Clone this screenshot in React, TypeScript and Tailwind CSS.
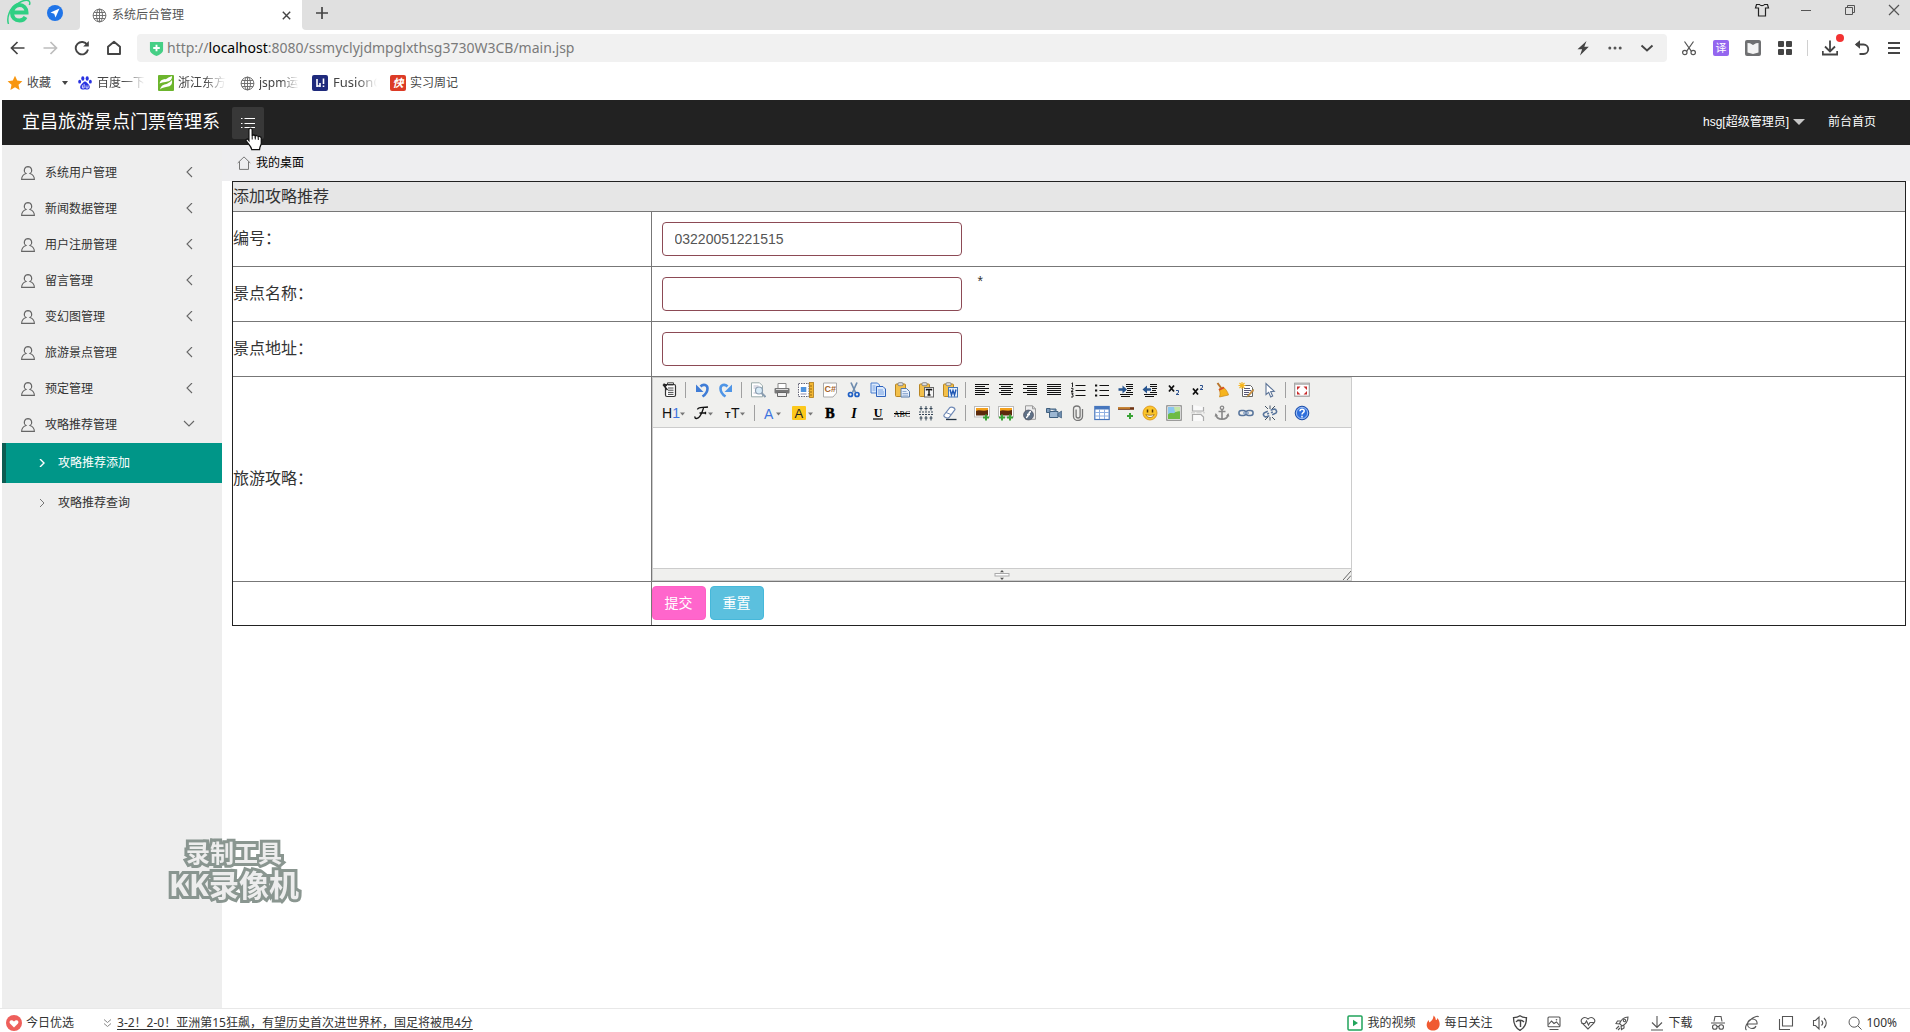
import React from "react";
import type { ReactNode } from "react";

type SvgProps = { children: ReactNode; size?: string; box?: string };

function Svg({ children, size = "w-4 h-4", box = "0 0 16 16" }: SvgProps) {
  return (
    <svg viewBox={box} className={`${size} block shrink-0`} fill="none" aria-hidden="true">
      {children}
    </svg>
  );
}

/* ---------- browser chrome icons ---------- */

const Globe = ({ size = "w-[15px] h-[15px]" }: { size?: string }) => (
  <Svg size={size}>
    <g stroke="#6b6b6b" strokeWidth="1">
      <circle cx="8" cy="8" r="6.8" />
      <ellipse cx="8" cy="8" rx="3.2" ry="6.8" />
      <path d="M8 1.2v13.6M1.2 8h13.6M2.2 4.8h11.6M2.2 11.2h11.6" />
    </g>
  </Svg>
);

const BrowserLogo = () => (
  <Svg size="w-6 h-6" box="0 0 24 24">
    <path d="M5 12.5h14.5c0-4.500-3-7.500-7-7.500S5 8.500 5 13s3 7.500 7.500 7.500c3 0 5-1.500 6-3.500" stroke="#2fcf83" strokeWidth="4" />
    <path d="M1.500 24C-.500 18 2 8 11 3.500 15 1 20-.500 22 1c1 1 1 2.500.300 4" stroke="#2fcf83" strokeWidth="1.500" />
  </Svg>
);

const Plane = () => (
  <Svg size="w-4 h-4">
    <circle cx="8" cy="8" r="8" fill="#1f74e8" />
    <path d="M12.500 3.500 3.500 7.600l3.700 1.200 1.300 3.700z" fill="#fff" />
  </Svg>
);

const Back = ({ dim = false }: { dim?: boolean }) => (
  <Svg>
    {dim ? (
      <path d="M1.500 8h13M8.500 2l6 6-6 6" stroke="#bdbdbd" strokeWidth="1.700" />
    ) : (
      <path d="M14.500 8h-13M7.500 2l-6 6 6 6" stroke="#444" strokeWidth="1.700" />
    )}
  </Svg>
);

const Reload = () => (
  <Svg>
    <path d="M13.300 5A6.200 6.200 0 1 0 14 9.500" stroke="#444" strokeWidth="1.900" />
    <path d="M14.800 1v5.600H9.200z" fill="#444" />
  </Svg>
);

const HomeOutline = () => (
  <Svg>
    <path d="M2 6.800 8 1.800l6 5V14H2z" stroke="#444" strokeWidth="1.900" strokeLinejoin="round" />
  </Svg>
);

const ShieldPlus = () => (
  <Svg size="w-[15px] h-[15px]">
    <path d="M1 1h14v8.500c0 3-3.500 5-7 6.500-3.500-1.500-7-3.500-7-6.500z" fill="#45cf85" />
    <path d="M8 4v7M4.500 7.500h7" stroke="#fff" strokeWidth="2" />
  </Svg>
);

const Bolt = () => (
  <Svg>
    <path d="M11.500 1 2.500 9.200h4.600L5 15.500l8.800-8.800H9.300z" fill="#444" />
  </Svg>
);
const Dots = () => (
  <Svg>
    <g fill="#555">
      <circle cx="2.800" cy="8" r="1.500" />
      <circle cx="8" cy="8" r="1.500" />
      <circle cx="13.200" cy="8" r="1.500" />
    </g>
  </Svg>
);
const ChevDown = () => (
  <Svg>
    <path d="m2.500 5.500 5.500 5 5.500-5" stroke="#444" strokeWidth="1.900" />
  </Svg>
);
const Scissors = () => (
  <Svg>
    <g stroke="#555" strokeWidth="1.200">
      <path d="m3.500 1.500 6.800 9.700M12.500 1.500 5.700 11.200" />
      <circle cx="3.800" cy="12.500" r="2.200" />
      <circle cx="12.200" cy="12.500" r="2.200" />
    </g>
  </Svg>
);
const Book = () => (
  <Svg>
    <rect width="16" height="16" rx="2" fill="#6f7072" />
    <path d="M2.500 3 5 3.200 8 5l3-1.800 2.500-.200v9.500L8 14l-5.500-1.500z" fill="#f4f4f4" />
  </Svg>
);
const Grid4 = () => (
  <Svg>
    <g fill="#444">
      <rect x="1" y="1" width="6" height="6" rx="1" />
      <rect x="9" y="1" width="6" height="6" rx="1" />
      <rect x="1" y="9" width="6" height="6" rx="1" />
      <rect x="9" y="9" width="6" height="6" rx="1" />
    </g>
  </Svg>
);
const Download = () => (
  <Svg>
    <path d="M8 .500v11M3 6.500l5 5 5-5M.800 11v3.500h14.400V11" stroke="#444" strokeWidth="1.800" />
  </Svg>
);
const UndoArrow = () => (
  <Svg>
    <path d="M2 4.500h7.500a4.700 4.700 0 0 1 0 9.500H5.500" stroke="#444" strokeWidth="1.800" />
    <path d="M6 .300v8.400L.800 4.500z" fill="#444" />
  </Svg>
);
const Burger = () => (
  <Svg>
    <path d="M2 3h12M2 8h12M2 13h12" stroke="#444" strokeWidth="2" />
  </Svg>
);

function TabStrip() {
  return (
    <div className="flex h-[30px] bg-white">
      <div className="flex w-20 shrink-0 items-start gap-4 rounded-br bg-[#e0e0e0] pl-[7px]">
        <BrowserLogo />
        <button className="mt-[5px]" aria-label="导航">
          <Plane />
        </button>
      </div>
      <div className="flex w-[222px] shrink-0 items-center pl-3 pr-2">
        <Globe />
        <span className="ml-[5px] flex-1 text-xs text-[#555]">系统后台管理</span>
        <button className="flex h-4 w-4 items-center justify-center" aria-label="关闭标签页">
          <Svg size="w-[9px] h-[9px]" box="0 0 9 9">
            <path d="m.800.800 7.400 7.400M8.200.800.800 8.200" stroke="#444" strokeWidth="1.400" />
          </Svg>
        </button>
      </div>
      <div className="flex flex-1 items-start justify-between rounded-bl bg-[#e0e0e0] pl-[14px] pr-2">
        <button className="mt-[7px]" aria-label="新建标签页">
          <Svg size="w-3 h-3" box="0 0 12 12">
            <path d="M6 0v12M0 6h12" stroke="#444" strokeWidth="1.700" />
          </Svg>
        </button>
        <div className="mt-[2px] flex gap-7">
          <button aria-label="皮肤">
            <Svg>
              <path d="M5.500 2.500H2.500L1.500 6h3v8h7V6h3l-1-3.500h-3c-1 1.500-4 1.500-5 0z" stroke="#222" strokeWidth="1.200" />
            </Svg>
          </button>
          <button aria-label="最小化">
            <Svg>
              <path d="M3 8.500h10" stroke="#555" />
            </Svg>
          </button>
          <button aria-label="还原">
            <Svg>
              <path d="M3.500 5.500h7v7h-7zM5.500 5V3.500h7v7H11" stroke="#555" />
            </Svg>
          </button>
          <button aria-label="关闭">
            <Svg>
              <path d="m3 3 10 10M13 3 3 13" stroke="#555" strokeWidth="1.200" />
            </Svg>
          </button>
        </div>
      </div>
    </div>
  );
}

function AddressRow() {
  return (
    <div className="flex h-9 items-center bg-white pl-[10px] pr-2">
      <div className="flex gap-4">
        <button aria-label="后退"><Back /></button>
        <button aria-label="前进"><Back dim /></button>
        <button aria-label="刷新"><Reload /></button>
        <button aria-label="主页"><HomeOutline /></button>
      </div>
      <div className="ml-[15px] flex h-7 flex-1 items-center rounded bg-[#f1f1f1] pl-3 pr-3">
        <ShieldPlus />
        <div className="ml-[3px] flex-1 text-sm text-[#7a7a7a]">
          http://<span className="text-black">localhost</span>:8080/ssmyclyjdmpglxthsg3730W3CB/main.jsp
        </div>
        <div className="flex gap-4">
          <button aria-label="极速模式"><Bolt /></button>
          <button aria-label="更多"><Dots /></button>
          <button aria-label="展开"><ChevDown /></button>
        </div>
      </div>
      <div className="ml-[14px] flex items-center">
        <div className="flex gap-4">
          <button aria-label="截图"><Scissors /></button>
          <button className="h-4 w-4 rounded-[2px] bg-[#9466ef] text-[11px] leading-4 text-white">译</button>
          <button aria-label="阅读"><Book /></button>
          <button aria-label="扩展"><Grid4 /></button>
        </div>
        <div className="mx-[14px] h-4 w-px bg-[#d0d0d0]" />
        <div className="flex gap-4">
          <button className="relative" aria-label="下载">
            <Download />
            <span className="absolute -right-1.5 -top-1.5 h-2 w-2 rounded-full bg-[#f33232]" />
          </button>
          <button aria-label="撤销关闭"><UndoArrow /></button>
          <button aria-label="菜单"><Burger /></button>
        </div>
      </div>
    </div>
  );
}

const fade = "whitespace-nowrap [mask-image:linear-gradient(to_right,black_55%,transparent)]";

function Bookmarks() {
  return (
    <div className="flex h-[34px] items-center bg-white pl-[7px] text-xs text-[#444]">
      <a href="#fav" className="flex items-center gap-[4px]">
        <Svg>
          <path d="m8 .800 2.200 4.800 5.200.600-3.900 3.500 1.100 5.200L8 12.300l-4.600 2.600 1.100-5.200L.600 6.200l5.200-.600z" fill="#f8960f" />
        </Svg>
        收藏
      </a>
      <Svg size="ml-[11px] w-[6px] h-[4px]" box="0 0 6 4">
        <path d="M0 0h6L3 4z" fill="#444" />
      </Svg>
      <a href="#baidu" className="ml-[10px] flex items-center gap-[5px]">
        <Svg size="w-[14px] h-[14px]">
          <g fill="#2932e1">
            <ellipse cx="5.500" cy="2.800" rx="1.800" ry="2.500" />
            <ellipse cx="10.500" cy="2.800" rx="1.800" ry="2.500" />
            <ellipse cx="1.900" cy="6.500" rx="1.700" ry="2.200" />
            <ellipse cx="14.100" cy="6.500" rx="1.700" ry="2.200" />
            <path d="M8 6.200c1.800 0 2.300 1.800 3.900 3.100 2.600 2.200 1.800 6-.900 6-1.200 0-2-.300-3-.300s-1.800.300-3 .300c-2.700 0-3.500-3.800-.900-6C5.700 8 6.200 6.200 8 6.200z" />
          </g>
          <path d="M5 10.500v3.200h2V9M9.200 10.800v2.900h2.300v-3" stroke="#fff" strokeWidth=".900" />
        </Svg>
        <span className={`w-12 ${fade}`}>百度一下</span>
      </a>
      <a href="#zj" className="ml-[13px] flex items-center gap-1">
        <Svg>
          <rect width="16" height="16" rx="1" fill="#6cb52d" />
          <path d="M1.500 8.500C3 3 7 5 9 3.500c2-1.500 3.500-1.500 5-2.500.300 5-4 5.500-6.500 6S3.500 7.500 1.500 8.500z" fill="#fff" />
          <path d="M2 14.500C3.500 9 7 10 9.500 8.500c1.500-1 3.500-2 4.500-3.500.800 6-3 6.500-6 7s-4.500 1-6 2.500z" fill="#fff" />
        </Svg>
        <span className={`w-12 ${fade}`}>浙江东方</span>
      </a>
      <a href="#jspm" className="ml-[14px] flex items-center gap-1">
        <Globe />
        <span className={`w-10 ${fade}`}>jspm运</span>
      </a>
      <a href="#fusion" className="ml-[13px] flex items-center gap-[5px]">
        <Svg>
          <rect width="16" height="16" rx="2" fill="#1f2a7c" />
          <path d="M5 4v8M8 8v4M11.500 3.500v5.500M11.500 10.500V12M5 11h3" stroke="#fff" strokeWidth="1.600" />
        </Svg>
        <span className={`w-11 text-[13px] ${fade}`}>FusionC</span>
      </a>
      <a href="#zhouji" className="ml-[13px] flex items-center gap-1">
        <span className="h-4 w-4 rounded-[2px] bg-[#dc3b26] text-center text-[11px] font-bold italic leading-4 text-white">快</span>
        实习周记
      </a>
    </div>
  );
}

/* ---------- application ---------- */

function AppHeader() {
  return (
    <header className="ml-0.5 flex h-[45px] items-center bg-[#222] pl-5 pr-[34px] text-white">
      <h1 className="w-[210px] pb-0.5 text-lg leading-6">宜昌旅游景点门票管理系</h1>
      <div className="relative">
        <button className="flex h-8 w-8 items-center justify-center rounded-[2px] bg-[#383838]" aria-label="折叠菜单">
          <Svg>
            <path d="M4.500 3.500H15M4.500 8.500H15M4.500 12.500H15" stroke="#fff" strokeWidth="1" />
            <path d="M1 3.500h1.500M1 8.500h1.500M1 12.500h1.500" stroke="#fff" strokeWidth="1" />
          </Svg>
        </button>
        <div className="pointer-events-none absolute left-[13px] top-5 z-10">
          <Svg size="w-[18px] h-6" box="0 0 18 24">
            <path
              d="M5.500 1.200c1 0 1.700.700 1.700 1.700v6c.300-1.300 3-1.200 3.100.300.600-1.100 2.800-.900 3 .700.800-.900 2.900-.500 3 1.300v5c0 2-1.600 3-1.800 6.500H6.800C6.500 19.500 3 17 1.200 13.800c-.700-1.400 1-2.400 2-1.300l.700.900V2.900c0-1 .600-1.700 1.600-1.700z"
              fill="#fff" stroke="#111" strokeWidth="1.300"
            />
            <path d="M7.200 9v3.500M10.300 9.500v3M13.300 10.500v2.500" stroke="#111" />
          </Svg>
        </div>
      </div>
      <nav className="ml-auto flex items-center pb-0.5 text-xs">
        <button className="flex items-center gap-1">
          hsg[超级管理员]
          <Svg size="w-3 h-[6px]" box="0 0 12 6">
            <path d="M0 0h12L6 6z" fill="#c6c6c6" />
          </Svg>
        </button>
        <a href="#front" className="ml-[23px]">前台首页</a>
      </nav>
    </header>
  );
}

const menu = [
  "系统用户管理", "新闻数据管理", "用户注册管理", "留言管理",
  "变幻图管理", "旅游景点管理", "预定管理", "攻略推荐管理",
];

function Sidebar() {
  return (
    <aside className="w-[220px] shrink-0 bg-[#eee] pt-[10px] text-xs text-[#333]">
      {menu.map((name, i) => (
        <button key={name} className="flex h-9 w-full items-center pl-[19px] pr-[27px] text-left">
          <Svg size="w-[14px] h-[14px]" box="0 0 14 14">
            <path d="M7 .600a3.700 3.700 0 0 1 2 6.800c2.500.900 4.300 2.800 4.400 6H.600c.100-3.200 1.900-5.100 4.400-6A3.700 3.700 0 0 1 7 .600z" stroke="#666" strokeWidth="1.100" />
          </Svg>
          <span className="ml-[10px] flex-1">{name}</span>
          <Svg size="w-3 h-3" box="0 0 12 12">
            <path d={i === menu.length - 1 ? "m1 2 5 5 5-5" : "M9 0 4 5l5 5"} stroke="#666" strokeWidth="1.100" />
          </Svg>
        </button>
      ))}
      <a href="#add" className="flex h-10 items-center border-l-4 border-[#0c5c52] bg-[#009688] pl-8 text-white">
        <Svg size="w-2 h-2" box="0 0 8 8">
          <path d="m2 0 4 4-4 4" stroke="#fff" strokeWidth="1.400" />
        </Svg>
        <span className="ml-3">攻略推荐添加</span>
      </a>
      <a href="#query" className="flex h-10 items-center pl-9">
        <Svg size="w-2 h-2" box="0 0 8 8">
          <path d="m2 0 4 4-4 4" stroke="#777" />
        </Svg>
        <span className="ml-3">攻略推荐查询</span>
      </a>
    </aside>
  );
}

/* ---------- editor toolbar drawings ---------- */

const Caret = ({ x }: { x: number }) => <path d={`M${x} 7.500h5l-2.500 3z`} fill="#777" />;

const clip = (
  <>
    <rect x="1.500" y="2" width="10" height="12.500" rx="1" fill="#f3c04a" stroke="#b98622" />
    <rect x="4" y=".700" width="5" height="3" rx="1" fill="#ddd" stroke="#777" strokeWidth=".800" />
  </>
);
const photo = (
  <>
    <rect x=".500" y="1.500" width="15" height="10.500" fill="#fff" stroke="#bbb" />
    <rect x="2" y="3" width="12" height="4.500" fill="#f3a01c" />
    <path d="M2 6c3-2 7 1 12-1v5.500H2z" fill="#5b2a0c" />
  </>
);
const plus = (x: number, y: number) => (
  <path d={`M${x} ${y - 3}v6M${x - 3} ${y}h6`} stroke="#3aa336" strokeWidth="2" />
);
const lines = (spans: [number, number][]) => (
  <path
    d={spans.map(([a, b], i) => `M${a} ${2.5 + i * 2}H${b}`).join("")}
    stroke="#111" strokeWidth="1"
  />
);

type Tool = { t: string; d: ReactNode } | null;

const row1: Tool[] = [
  { t: "HTML代码", d: <><rect x="3.500" y="2.500" width="10" height="12" rx="1.500" fill="#fff" stroke="#333" strokeWidth="1.200" /><path d="M5.500 2V.800h6V3h-6zM6 6h5.500M6 8.200h5.500M6 10.400h5.500M6 12.400h5.500" stroke="#333" strokeWidth=".900" /><path d="M1 2.500 5.500 8M1.500 2l3.500 1.500" stroke="#222" strokeWidth="1.400" /></> },
  null,
  { t: "后退", d: <><path d="M6.500 4.500c3-3 7-1.500 7 2 0 3.500-2 6-5 8" stroke="#3f7cd6" strokeWidth="2.600" /><path d="M2 2.500v7.500h7.500z" fill="#3f7cd6" /></> },
  { t: "前进", d: <><path d="M9.500 4.500c-3-3-7-1.500-7 2 0 3.500 2 6 5 8" stroke="#4f95e6" strokeWidth="2.600" /><path d="M14 2.500v7.500H6.500z" fill="#4f95e6" /></> },
  null,
  { t: "预览", d: <><path d="M1.500.800h8l3 3v11h-11z" fill="#fff" stroke="#9aa" /><path d="M3.500 4h5M3.500 6h3M3.500 11h3" stroke="#bbc" /><circle cx="9" cy="8.500" r="3.500" fill="#d8ebf7" stroke="#8a9db0" strokeWidth="1.200" /><path d="m11.500 11 4 4" stroke="#8a9db0" strokeWidth="2" /></> },
  { t: "打印", d: <><path d="M4 1.500h8v5H4z" fill="#fff" stroke="#888" /><rect x=".500" y="6" width="15" height="5.500" rx="1" fill="#777" /><path d="M2 7.500h12" stroke="#ddd" /><path d="M3.500 10.500h9v4h-9z" fill="#eee" stroke="#666" /></> },
  { t: "插入模板", d: <><rect x=".500" y="1.500" width="10.500" height="13" fill="#fff" stroke="#667" strokeDasharray="1.500 1" /><rect x="2.800" y="5" width="5.500" height="5" fill="#4f93dd" /><path d="M2.500 12h6" stroke="#88a" /><rect x="11.500" y=".500" width="4" height="15" fill="#f3b733" stroke="#ad7a17" strokeWidth=".800" /><path d="M12 4h2M12 7h2M12 10h2M12 13h2" stroke="#7c5510" strokeWidth=".800" /></> },
  { t: "插入程序代码", d: <><path d="M1.500 1h13v10l-3.500 4h-9.500z" fill="#fff" stroke="#aaa" /><text x="2.500" y="10" fontSize="9" fontWeight="bold" fill="#a4632b" fontFamily="Liberation Sans">C#</text></> },
  { t: "剪切", d: <><path d="m5 .500 4.500 10M11 .500 6.500 10.500" stroke="#6f8cae" strokeWidth="1.700" /><circle cx="4.500" cy="12.500" r="2" stroke="#1f5fc4" strokeWidth="1.700" /><circle cx="11" cy="12.500" r="2" stroke="#1f5fc4" strokeWidth="1.700" /></> },
  { t: "复制", d: <><path d="M1 1h6.500l2 2v8H1z" fill="#dbe9fb" stroke="#4b7fcf" /><path d="M6.500 4.500H13l2.500 2.500v7.500h-9z" fill="#dbe9fb" stroke="#2f63bd" /><path d="M8 8h5M8 10h6M8 12h6M2.500 4h3M2.500 6h3M2.500 8h3" stroke="#6d9ae0" strokeWidth=".900" /></> },
  { t: "粘贴", d: <>{clip}<path d="M7 6.500h5.500l3 3v5.500H7z" fill="#e6effb" stroke="#5578a8" /><path d="M8.500 9.500h4M8.500 11.500h5.500M8.500 13.200h5.500" stroke="#7d9cc9" strokeWidth=".800" /></> },
  { t: "粘贴为无格式文本", d: <>{clip}<rect x="6.500" y="5.500" width="9" height="9.500" fill="#f6f6f6" stroke="#666" /><path d="M8.500 8.500v-1h5v1M11 7.500v5.500M9.500 13h3" stroke="#111" strokeWidth="1.400" /></> },
  { t: "从Word粘贴", d: <>{clip}<rect x="6.500" y="5.500" width="9" height="9.500" fill="#e8f1fd" stroke="#4477b8" /><path d="m8 7.500 1.500 5.500L11 8.500l1.500 4.500L14 7.500" stroke="#2058b4" strokeWidth="1.400" /></> },
  null,
  { t: "左对齐", d: lines([[1, 15], [1, 11], [1, 15], [1, 11], [1, 15], [1, 11]]) },
  { t: "居中", d: lines([[1, 15], [3, 13], [1, 15], [3, 13], [1, 15], [3, 13]]) },
  { t: "右对齐", d: lines([[1, 15], [5, 15], [1, 15], [5, 15], [1, 15], [5, 15]]) },
  { t: "两端对齐", d: lines([[1, 15], [1, 15], [1, 15], [1, 15], [1, 15], [1, 15]]) },
  { t: "编号", d: <><path d="M5.500 3.500H15.500M5.500 8.500H15.500M5.500 13.500H15.500" stroke="#111" /><path d="M1.500 1.500 2.500.800V5M1 6.300h2v1.500L1 9.500h2.300M1 11h2.200L2 12.600h1v2.400H1" stroke="#111" strokeWidth=".900" /></> },
  { t: "项目符号", d: <><path d="M5.500 3.500H15M5.500 8.500H15M5.500 13.500H15" stroke="#111" /><path d="M1 3.500h2.200M1 8.500h2.200M1 13.500h2.200" stroke="#111" strokeWidth="2.200" /></> },
  { t: "增加缩进", d: <><path d="M8 2.500h7M8 4.500h7M9 6.500h6M9 8.500h4M8 10.500h7M2 12.500h13M3 14.500h9" stroke="#111" /><path d="M.500 6.300h4V3.500l4.500 4-4.500 4V8.700h-4z" fill="#28558f" /></> },
  { t: "减少缩进", d: <><path d="M8 2.500h7M8 4.500h7M10 6.500h5M10 8.500h4M8 10.500h7M2 12.500h13M3 14.500h9" stroke="#111" /><path d="M9 6.300H5V3.500l-4.500 4 4.500 4V8.700h4z" fill="#28558f" /></> },
  { t: "下标", d: <><path d="m3 3.500 5 6M8 3.500l-5 6" stroke="#111" strokeWidth="1.800" /><path d="M10 8.500h2.500v2L10 12.500h3" stroke="#2a4f8c" /></> },
  { t: "上标", d: <><path d="m3 6.500 5 6M8 6.500l-5 6" stroke="#111" strokeWidth="1.800" /><path d="M10 3.500h2.500v2L10 7.500h3" stroke="#2a4f8c" /></> },
  { t: "清理HTML代码", d: <><path d="m3.500 1 4 5.500" stroke="#b8742a" strokeWidth="2" /><path d="m5 7 4-2c2 1 5 5 5.500 8L5.500 15C6.500 12 6 9.500 5 7z" fill="#f6b41e" stroke="#c98512" strokeWidth=".700" /><path d="m5 8 5-2.500" stroke="#d9482b" strokeWidth="1.500" /></> },
  { t: "一键排版", d: <><path d="M4.500 3.500h8l2 2v9h-10z" fill="#fff" stroke="#666" /><path d="M6 6.500h6M6 8.500h7M6 10.500h5M6 12.500h5" stroke="#446" strokeWidth=".900" /><path d="M4 0v7M.500 3.500h7M1.500 1l5 5M6.500 1l-5 5" stroke="#f7b51b" strokeWidth="1.100" /><path d="m15 7-5 6-1.500 2 2.200-.800L16 8.500z" fill="#e6953c" stroke="#774" strokeWidth=".500" /></> },
  { t: "全选", d: <path d="M4 1.500v11l2.700-2.200 2 4.700 2-1-2-4.300 3.600-.400z" fill="#fff" stroke="#5b7396" strokeWidth="1.100" /> },
  null,
  { t: "全屏显示", d: <><rect x=".700" y="1.200" width="14.600" height="13" fill="#fff" stroke="#999" strokeWidth="1.100" /><path d="M1 2.200h14" stroke="#bbb" strokeWidth="1.500" /><path d="M3 4.500h3.500L3 8zM13 4.500H9.500L13 8zM3 12.500h3.500L3 9zM13 12.500H9.500L13 9z" fill="#c92b2b" /></> },
];

const row2: Tool[] = [
  { t: "粗体", d: <text x="8" y="13" textAnchor="middle" fontSize="14" fontWeight="900" fill="#000" stroke="#000" strokeWidth=".600" fontFamily="Liberation Serif">B</text> },
  { t: "斜体", d: <text x="8" y="13" textAnchor="middle" fontSize="14" fontWeight="bold" fontStyle="italic" fill="#000" fontFamily="Liberation Serif">I</text> },
  { t: "下划线", d: <><text x="8" y="12" textAnchor="middle" fontSize="12" fontWeight="bold" fill="#000" fontFamily="Liberation Serif">U</text><path d="M3 14h10" stroke="#000" strokeWidth="1.200" /></> },
  { t: "删除线", d: <><text x="8" y="11.500" textAnchor="middle" fontSize="8" fill="#000" fontFamily="Liberation Serif">ABC</text><path d="M0 8.500h16" stroke="#000" /></> },
  { t: "行距", d: <><path d="M1 7h14M1 9.500h14" stroke="#345" strokeDasharray="2 1" /><path d="M3 5.500V1M8 5.500V1M13 5.500V1M3 11v4.500M8 11v4.500M13 11v4.500" stroke="#345" /><path d="M1.500 3.500h3M6.500 3.500h3M11.500 3.500h3M1.500 13h3M6.500 13h3M11.500 13h3" stroke="#345" /></> },
  { t: "删除格式", d: <><path d="m2 10 6-7.500c1-1 5 0 5 2l-6 8c-1.500 1.500-6-.500-5-2.500z" fill="#fff" stroke="#6f89b5" strokeWidth="1.200" /><path d="M4 14.500h10.500" stroke="#234" strokeWidth="1.300" /><path d="m4 7.500 5 2" stroke="#6f89b5" /></> },
  null,
  { t: "图片", d: <>{photo}{plus(12, 12.500)}</> },
  { t: "批量图片上传", d: <>{photo}{plus(4, 12.500)}{plus(12, 12.500)}</> },
  { t: "Flash", d: <><path d="M3.500.800h7l3 3v10.500h-10z" fill="#eee" stroke="#999" /><path d="M10.500.800v3h3" stroke="#999" /><circle cx="6.500" cy="10" r="5" fill="#5f7186" stroke="#445" strokeWidth=".600" /><path d="M9 6.500c-3 0-2 6-5 6M5 9.500h3" stroke="#fff" strokeWidth="1.400" /></> },
  { t: "视音频", d: <><path d="M3.500 6.500H12v6H3.500z" fill="#9db7d2" stroke="#40607f" /><path d="m12 8.500 3.500-2.500v7L12 11z" fill="#6c8cae" stroke="#40607f" strokeWidth=".700" /><path d="M.500 3.500H4v4H.500zM4 4h6v2.500" fill="#7d9bbb" stroke="#40607f" /></> },
  { t: "插入文件", d: <path d="M12.500 4v7.500a4.500 4 0 0 1-9 0V4a3.300 3 0 0 1 6.600 0V11a2 2 0 0 1-4 0V4.500" stroke="#777" strokeWidth="1.300" /> },
  { t: "表格", d: <><rect x=".800" y="1.500" width="14.400" height="13" fill="#fff" stroke="#4676bd" strokeWidth="1.200" /><path d="M1 3h14" stroke="#4676bd" strokeWidth="3" /><path d="M1 7.500h14M1 11h14M5.500 4v10M10.500 4v10" stroke="#8fb0e2" /></> },
  { t: "插入横线", d: <><path d="M0 3.500h16" stroke="#6e3413" strokeWidth="2.600" /><path d="M0 3h12" stroke="#f0a53a" strokeWidth="1.200" />{plus(12, 11)}</> },
  { t: "插入表情", d: <><circle cx="8" cy="8" r="7" fill="#fbc52a" stroke="#d98e13" strokeWidth=".800" /><path d="M5.500 4.500v3M10.500 4.500v3" stroke="#5b3a08" strokeWidth="1.500" /><path d="M3.800 9.500c1.500 4 7 4 8.400 0-2 1-6.400 1-8.400 0z" fill="#fff" stroke="#8b5a0c" strokeWidth=".700" /></> },
  { t: "百度地图", d: <><rect x=".800" y=".800" width="14.400" height="14.400" fill="#fff" stroke="#777" /><rect x="2" y="2" width="12" height="12" fill="#8cc7ee" /><path d="M2 9.500c3-3 5 0 7-2s3-2 5-1V14H2z" fill="#6dbb45" /><path d="M8 2h6v4L9 7z" fill="#c5e6a8" /></> },
  { t: "插入分页符", d: <><path d="M2.500 0v6h11V2M2.500 16V9.500H11l2.500 2.500v4" fill="#fafafa" stroke="#aaa" strokeWidth="1.200" /><path d="M1 7.800h4M6.500 7.800h5M13 7.800h2" stroke="#ccc" /></> },
  { t: "锚点", d: <><circle cx="8" cy="2.800" r="1.700" stroke="#888" strokeWidth="1.300" /><path d="M8 4.500V14M4.500 6.500h7M1.800 9.500c.500 3 3 4.700 6.200 4.700s5.700-1.700 6.200-4.700" stroke="#888" strokeWidth="1.600" /><path d="m.500 11.500 1.200-3.500L4 11zM15.500 11.500 14.300 8 12 11z" fill="#888" /></> },
  { t: "超级链接", d: <><rect x=".900" y="5.500" width="7" height="5" rx="2.500" stroke="#58759c" strokeWidth="1.500" /><rect x="8.100" y="5.500" width="7" height="5" rx="2.500" stroke="#58759c" strokeWidth="1.500" /><path d="M5 8h6" stroke="#8ba4c6" strokeWidth="1.600" /></> },
  { t: "取消超级链接", d: <><g transform="rotate(-20 8 8)"><path d="M6.500 5.700H3.500a2.300 2.300 0 0 0 0 4.600h3M5 8h2M9.500 5.700h3a2.300 2.300 0 0 1 0 4.600h-3M9 8h2" stroke="#58759c" strokeWidth="1.600" /></g><path d="M8 .500v3.500M3 1l3 3M13 1l-3 3M8 12v3.500M3 15l3-3M13 15l-3-3" stroke="#345" strokeWidth=".900" /></> },
  null,
  { t: "关于", d: <><circle cx="8" cy="8" r="6.800" fill="#2f6fdc" stroke="#1f4fa8" /><circle cx="8" cy="8" r="5.600" stroke="#bcd3f8" strokeWidth=".800" /><path d="M6 6.300c0-2.700 4.200-2.500 4.200-.200C10.200 7.800 8 7.600 8 9.500M8 10.800v1.600" stroke="#fff" strokeWidth="1.500" /></> },
];

const Divider = () => (
  <span className="flex w-2 shrink-0 pl-[3px]">
    <span className="h-4 w-px bg-[#a0a0a0]" />
  </span>
);

function ToolRow({ tools, children }: { tools: Tool[]; children?: ReactNode }) {
  return (
    <div className="flex h-[23px] items-center">
      {children}
      {tools.map((tool, i) =>
        tool ? (
          <button key={i} type="button" title={tool.t} aria-label={tool.t} className="flex h-[22px] w-6 items-center justify-center">
            <Svg>{tool.d}</Svg>
          </button>
        ) : (
          <Divider key={i} />
        ),
      )}
    </div>
  );
}

const wideBtn = "flex h-[22px] w-[31px] items-center pl-1";

function Editor() {
  return (
    <div className="w-[700px] border border-[#ccc] bg-white">
      <div className="border-b border-[#ccc] bg-[#f0f0ee] px-[5px] pb-[3px]">
        <ToolRow tools={row1} />
        <ToolRow tools={row2}>
          <button type="button" title="段落" className={wideBtn}>
            <Svg size="w-[23px] h-4" box="0 0 23 16">
              <text x="0" y="13" fontSize="14" fill="#111" fontFamily="Liberation Sans">H<tspan fill="#3d74e0">1</tspan></text>
              <Caret x={18} />
            </Svg>
          </button>
          <button type="button" title="字体" className={wideBtn}>
            <Svg size="w-[23px] h-4" box="0 0 23 16">
              <path d="M4.500 4.500C5 1.500 9 3 15 2M10.500 3C9 7 8 13 3.500 13.500c-1.500 0-2-1-1.200-2M6.500 8h6M12.500 6.800v2.400" stroke="#111" strokeWidth="1.300" />
              <Caret x={15} />
            </Svg>
          </button>
          <button type="button" title="文字大小" className={wideBtn}>
            <Svg size="w-[23px] h-4" box="0 0 23 16">
              <text x="1" y="13" fontSize="9" fontWeight="bold" fill="#111" fontFamily="Liberation Sans">T</text>
              <text x="7" y="13" fontSize="14" fill="#111" fontFamily="Liberation Sans">T</text>
              <Caret x={16} />
            </Svg>
          </button>
          <Divider />
          <button type="button" title="文字颜色" className="flex h-[22px] w-7 items-center pl-1">
            <Svg size="w-5 h-4" box="0 0 20 16">
              <text x="1" y="14" fontSize="14" fill="#3d74e0" fontFamily="Liberation Sans">A</text>
              <Caret x={13} />
            </Svg>
          </button>
          <button type="button" title="文字背景" className={wideBtn}>
            <Svg size="w-[23px] h-4" box="0 0 23 16">
              <rect x="1" y="1" width="14" height="14" rx="1" fill="#fcc81c" />
              <text x="3.500" y="13" fontSize="13" fill="#222" fontFamily="Liberation Sans">A</text>
              <Caret x={17} />
            </Svg>
          </button>
        </ToolRow>
      </div>
      <textarea id="guide" className="block h-[140px] w-full resize-none bg-white p-1 outline-none" />
      <div className="flex h-3 items-center border-t border-[#ccc] bg-[#f0f0ee]">
        <span className="flex-1" />
        <Svg size="w-4 h-[10px]" box="0 0 16 10">
          <path d="M8 0 6 2.200h4zM8 10 6 7.800h4z" fill="#555" />
          <rect x="1" y="3.500" width="14" height="2.500" fill="#fff" stroke="#aaa" />
        </Svg>
        <span className="flex flex-1 justify-end">
          <Svg size="w-2 h-[10px]" box="0 0 8 10">
            <path d="M0 10 8 1M4 10l4-4.500" stroke="#666" />
          </Svg>
        </span>
      </div>
    </div>
  );
}

const inputClass =
  "block h-[34px] w-[300px] rounded border border-[#8c4a55] bg-white px-3 text-sm text-[#555] outline-none";

const cell = "border border-[#777] p-0";

function GuideForm() {
  return (
    <form className="ml-[10px] mr-1 border border-[#222]" onSubmit={(e) => e.preventDefault()}>
      <table className="w-full table-fixed border-collapse border-hidden text-base text-[#333]">
        <colgroup>
          <col className="w-1/4" />
          <col className="w-3/4" />
        </colgroup>
        <tbody>
          <tr>
            <th colSpan={2} className={`${cell} bg-[#e6e6e6] text-left font-normal leading-[29px]`}>添加攻略推荐</th>
          </tr>
          <tr>
            <td className={cell}><label htmlFor="code">编号：</label></td>
            <td className={cell}>
              <div className="px-[10px] py-[10px]">
                <input id="code" type="text" defaultValue="03220051221515" className={inputClass} />
              </div>
            </td>
          </tr>
          <tr>
            <td className={cell}><label htmlFor="spot">景点名称：</label></td>
            <td className={cell}>
              <div className="flex gap-4 px-[10px] py-[10px]">
                <input id="spot" type="text" className={inputClass} />
                <span className="text-sm leading-2">*</span>
              </div>
            </td>
          </tr>
          <tr>
            <td className={cell}><label htmlFor="address">景点地址：</label></td>
            <td className={cell}>
              <div className="px-[10px] py-[10px]">
                <input id="address" type="text" className={inputClass} />
              </div>
            </td>
          </tr>
          <tr>
            <td className={cell}><label htmlFor="guide">旅游攻略：</label></td>
            <td className={cell}><Editor /></td>
          </tr>
          <tr>
            <td className={cell} />
            <td className={cell}>
              <div className="flex gap-1 pb-[5px] pt-1 text-sm text-white">
                <button type="submit" className="h-[34px] w-[54px] rounded border border-[#ff5fc4] bg-[#ff66cc]">提交</button>
                <button type="reset" className="h-[34px] w-[54px] rounded border border-[#46b8da] bg-[#5bc0de]">重置</button>
              </div>
            </td>
          </tr>
        </tbody>
      </table>
    </form>
  );
}

function StatusBar() {
  const s = { stroke: "#555", strokeWidth: 1.1 };
  return (
    <footer className="flex h-6 items-center border-t border-[#e8e8e8] bg-white pl-[6px] pr-[13px] pt-1 text-xs text-[#333]">
      <a href="#today" className="flex items-center gap-1">
        <Svg>
          <circle cx="8" cy="8" r="8" fill="#ee5f5b" />
          <path d="M8 12.500 4 8.500c-1.500-2 1-5 4-2 3-3 5.500 0 4 2z" fill="#fff" />
        </Svg>
        今日优选
      </a>
      <a href="#news" className="ml-[30px] flex items-center">
        <Svg size="w-[7px] h-2" box="0 0 7 8">
          <path d="m0 .500 3.500 3 3.500-3M0 4.500l3.500 3 3.500-3" stroke="#888" />
        </Svg>
        <span className="ml-[6px] underline underline-offset-2">3-2！2-0！亚洲第15狂飙，有望历史首次进世界杯，国足将被甩4分</span>
      </a>
      <div className="ml-auto flex items-center">
        <button className="flex items-center gap-1">
          <Svg>
            <rect x="1" y="1" width="14" height="14" rx="1" stroke="#20a45b" strokeWidth="1.500" />
            <path d="M6 4.800v6.400L11 8z" fill="#20a45b" />
          </Svg>
          我的视频
        </button>
        <button className="ml-[11px] flex items-center gap-1">
          <Svg size="w-[14px] h-4" box="1 0 14 16">
            <path d="M8.500.500c3 2.500 1.500 4.500 3 4.500.700-.500.700-1.500.700-2 2 2 2.800 4.500 2.300 7.500-.500 3-3 5-6.500 5s-6-2-6.300-5C1.500 8 2.500 7 3.500 5c.500 1 .500 2 1 2.500C6.500 6 8.500 4 8.500.500z" fill="#f05a32" />
          </Svg>
          每日关注
        </button>
        <div className="ml-[20px] flex gap-[18px]">
          <button aria-label="安全">
            <Svg>
              <path d="M8 .800c2 1.400 4.500 1.800 6.500 1.800C14.500 9 13 13 8 15.300 3 13 1.500 9 1.500 2.600 3.500 2.600 6 2.200 8 .800z" stroke="#444" strokeWidth="1.300" />
              <path d="M4 7c1.500-2.500 6-2.500 8 0M5.500 4.800 8.500 6v6" stroke="#444" strokeWidth="1.400" />
            </Svg>
          </button>
          <button aria-label="图片">
            <Svg>
              <rect x="2" y="2" width="12" height="9.800" rx="1" {...s} />
              <path d="m2.500 9.500 3-3.500L8 8.500l2.500-1.500 3 3.500M3.500 14.500h9" {...s} />
              <circle cx="10.500" cy="4.800" r=".800" fill="#555" />
            </Svg>
          </button>
          <button aria-label="健康">
            <Svg>
              <path d="M8 14 2 8C-.500 4.500 4 .500 8 4c4-3.500 8.500.500 6 4z" {...s} />
              <path d="M1.500 8.500H5l1.500-2.500L8.500 10 10 7.500h4" {...s} />
            </Svg>
          </button>
          <button aria-label="加速">
            <Svg>
              <path d="M14 2c-4 0-6.500 2-8.500 6.500L8 11c4-2 6-4.500 6-9zM6.500 6 3.500 6 2 8.500l3.500.500M10 9.500v3.500L7.500 14.500 7 11M2 14l3-3M4 15l2-2" {...s} />
              <circle cx="10.500" cy="5.500" r="1.200" {...s} />
            </Svg>
          </button>
        </div>
        <button className="ml-[20px] flex items-center gap-1">
          <Svg size="w-[14px] h-4" box="1 0 14 16">
            <path d="M8 1v11M3 7.500l5 5 5-5M2 15h12" {...s} />
          </Svg>
          下载
        </button>
        <div className="ml-[18px] flex gap-[18px]">
          <button aria-label="无痕">
            <Svg>
              <path d="M4 6.500 5 1.500h6l1 5M1 8h14M7 11.500h2" {...s} />
              <circle cx="4.800" cy="12" r="2.300" {...s} />
              <circle cx="11.200" cy="12" r="2.300" {...s} />
            </Svg>
          </button>
          <button aria-label="内核">
            <Svg>
              <path d="M3.500 9h9.500c.500-3-1.500-5-4.500-5S3.500 6.500 3.500 9s2 4.500 4.500 4.500c2 0 3.500-1 4-2.500M2.500 15C0 13 3 7 8 3.500c3-2 6-3 6.500-1.500" {...s} />
            </Svg>
          </button>
          <button aria-label="窗口">
            <Svg>
              <path d="M4.500 1.500h10v9.500h-10zM1.500 4v10.500H12" {...s} />
            </Svg>
          </button>
          <button aria-label="声音">
            <Svg>
              <path d="M1.500 5.500h2L7 2v12l-3.500-3.500h-2zM9.500 5.500c1.500 1.500 1.500 3.500 0 5M12 3c3 3 3 7 0 10" {...s} />
            </Svg>
          </button>
        </div>
        <button className="ml-[20px] flex items-center gap-1 text-xs">
          <Svg size="w-[14px] h-[14px]">
            <circle cx="7" cy="7" r="5.800" {...s} />
            <path d="m11 11 4.500 4.500" {...s} />
          </Svg>
          100%
        </button>
      </div>
    </footer>
  );
}

function Watermark() {
  return (
    <div className="pointer-events-none absolute left-[146px] top-[837px] z-20 flex w-[176px] flex-col items-center font-['Noto_Sans','Noto_Sans_CJK_SC',sans-serif] font-bold text-[#ededed] opacity-95 [-webkit-text-stroke:6px_#84918b] [paint-order:stroke_fill] [stroke-linejoin:round]">
      <span className="text-2xl leading-8">录制工具</span>
      <span className="text-[30px] leading-8">KK录像机</span>
    </div>
  );
}

export default function App() {
  return (
    <div className="relative flex min-h-screen flex-col bg-white font-['Liberation_Sans','Noto_Sans_CJK_SC',sans-serif]">
      <div className="font-['Noto_Sans','Noto_Sans_CJK_SC',sans-serif]">
        <TabStrip />
        <AddressRow />
        <Bookmarks />
      </div>
      <AppHeader />
      <div className="ml-0.5 flex flex-1">
        <Sidebar />
        <main className="min-w-0 flex-1">
          <div className="flex h-9 items-center gap-[5px] bg-[#eeeef0] pl-[15px] text-xs text-black">
            <Svg size="w-[14px] h-[14px]" box="0 0 14 14">
              <path d="M.700 7 7 .900 13.300 7M2.500 5.500v7.900h9V5.500" stroke="#777" />
            </Svg>
            <a href="#desktop">我的桌面</a>
          </div>
          <GuideForm />
        </main>
      </div>
      <div className="font-['Noto_Sans','Noto_Sans_CJK_SC',sans-serif]">
        <StatusBar />
      </div>
      <Watermark />
    </div>
  );
}
